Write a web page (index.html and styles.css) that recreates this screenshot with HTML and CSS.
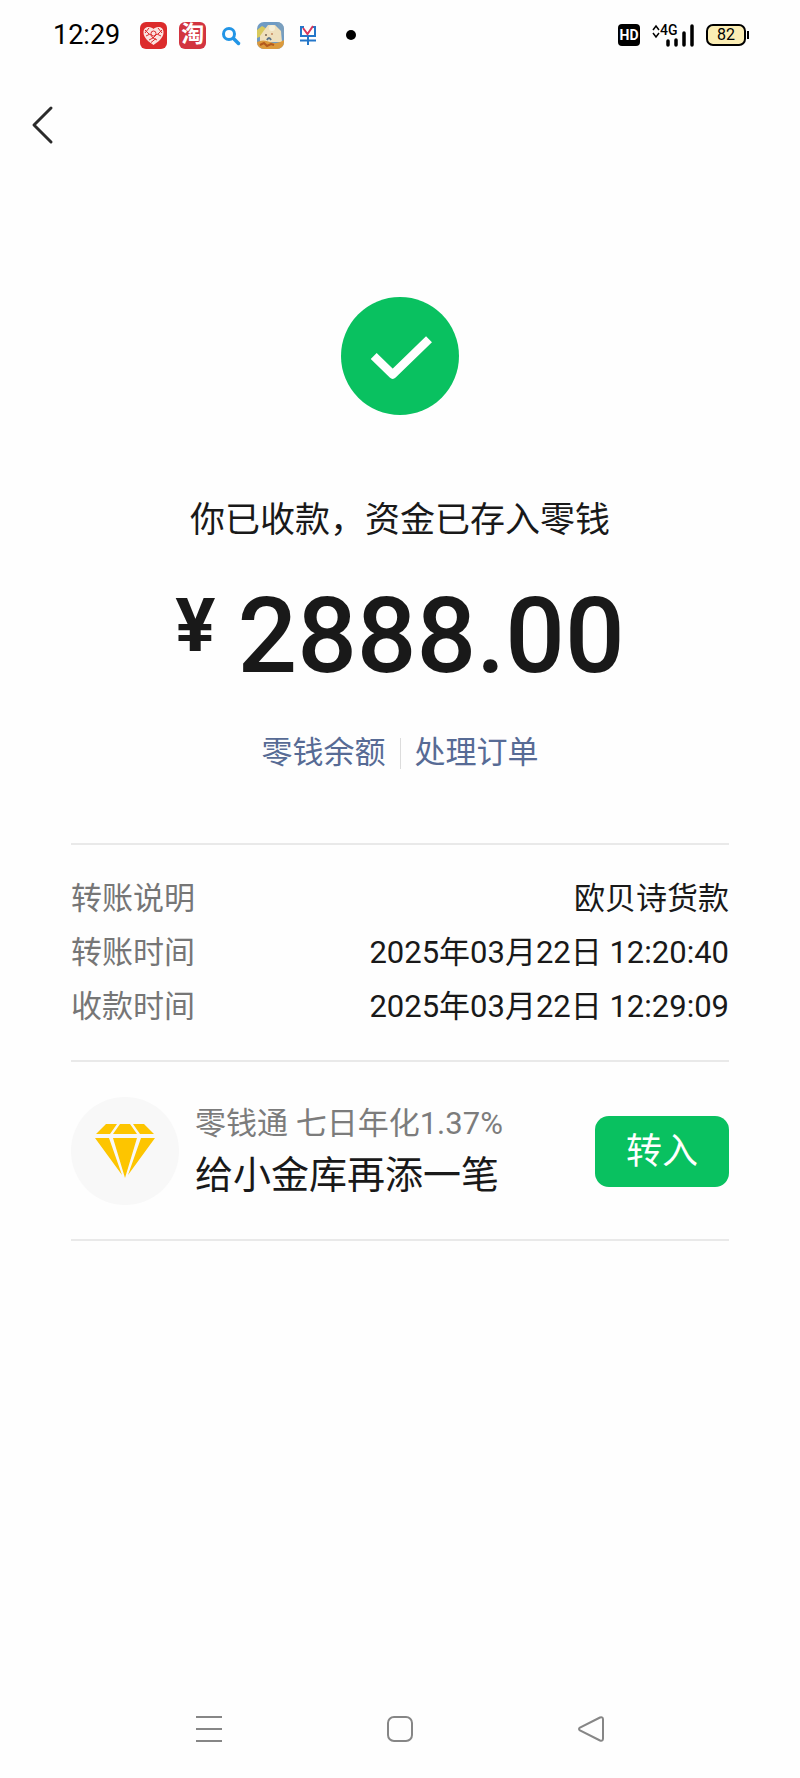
FILE: index.html
```html
<!DOCTYPE html>
<html lang="zh-CN">

<head>
    <meta charset="UTF-8">
    <meta name="viewport" content="width=device-width, initial-scale=1.0">
    <title>收款详情</title>
    <link rel="stylesheet" href="styles.css">
</head>

<body>
    <div class="status">
        <div class="status-left">
            <span class="time">12:29</span>
            <svg class="app" viewBox="0 0 27 27">
                <rect width="27" height="27" rx="6" fill="#dc2b2b" />
                <path d="M13.500 23C9 20 3.500 16 3.500 10.500C3.500 6.500 6 5 8.500 5C11 5 12.500 6 13.500 7C14.500 6 16 5 18.500 5C21 5 23.500 6.500 23.500 10.500C23.500 16 18 20 13.500 23Z" fill="#fbe3df" />
                <g fill="none" stroke="#dc2b2b" stroke-width="1">
                    <path d="M5 8l4 4M9 6l-4 5M18 6l4 5M22 8l-4 4M6 14l4-2 3 4 4-4 4 2M9 18l4-2 4 2M11 20.500l5-4" />
                    <circle cx="13.500" cy="11.500" r="2.500" />
                </g>
            </svg>
            <span class="app tao">淘</span>
            <svg class="app" viewBox="0 0 27 27">
                <circle cx="11" cy="12" r="5.500" fill="none" stroke="#2295e6" stroke-width="3" />
                <path d="M15.500 16.500l5 5" stroke="#2295e6" stroke-width="3.500" stroke-linecap="round" />
            </svg>
            <svg class="app" viewBox="0 0 27 27">
                <defs>
                    <clipPath id="round"><rect width="27" height="27" rx="7" /></clipPath>
                </defs>
                <g clip-path="url(#round)">
                    <rect width="27" height="27" fill="#6f9bc4" />
                    <path d="M0 8l5-4 5 3-3 6-7 3z" fill="#d8c95c" />
                    <path d="M20 0h7v14l-5-5z" fill="#7a9fbe" />
                    <path d="M3 20V14l5-7 3-4h7l6 6 1 11z" fill="#efe0bd" />
                    <circle cx="15" cy="6" r="3" fill="#f6eed8" />
                    <path d="M0 20q6-3 13 0t14-2v9H0z" fill="#dc9a3c" />
                    <path d="M3 23l4-2 3 3 4-2 3 1" fill="none" stroke="#b3591c" stroke-width="2" />
                    <path d="M10 18q2-4 4 0" fill="none" stroke="#57728a" stroke-width="2" />
                    <circle cx="9" cy="13" r="1" fill="#7b6650" />
                    <circle cx="15" cy="12" r="1" fill="#c78a60" />
                </g>
            </svg>
            <svg class="app" viewBox="0 0 27 27" fill="none" stroke-width="2">
                <path d="M8 5H5v9h14V5h-3M4 18.500h16M12 14v9" stroke="#2376c9" />
                <path d="M7 6l4.500 6L17 4" stroke="#d8375c" />
            </svg>
            <span class="dot"></span>
        </div>
        <div class="status-right">
            <span class="hd">HD</span>
            <svg class="signal" viewBox="0 0 42 24">
                <path d="M1 7l3-4 3 4M1 10l3 4 3-4" fill="none" stroke="#000" stroke-width="1.500" />
                <text class="signal-text" x="8" y="12">4G</text>
                <path d="M16 18v4M24 17v5M32 10v12M40 3v19" stroke="#000" stroke-width="3.500" stroke-linecap="round" />
            </svg>
            <span class="battery">82</span>
        </div>
    </div>

    <header class="header">
        <button class="back" aria-label="返回">
            <svg width="24" height="42" viewBox="0 0 24 42" fill="none" stroke="#2b2b2b" stroke-width="3" stroke-linecap="round" stroke-linejoin="round">
                <path d="M20 4L3 21l17 17" />
            </svg>
        </button>
    </header>

    <main class="main">
        <svg class="success" viewBox="0 0 118 118">
            <circle cx="59" cy="59" r="59" fill="#09c160" />
            <path d="M32.700 59l19 18.500L88 42.300" fill="none" stroke="#fff" stroke-width="8.500" stroke-linejoin="round" />
        </svg>
        <h1 class="title">你已收款，资金已存入零钱</h1>
        <p class="amount"><span class="yen">¥</span>2888.00</p>
        <div class="links">
            <a href="#">零钱余额</a>
            <span class="bar"></span>
            <a href="#">处理订单</a>
        </div>

        <dl class="detail">
            <div class="row">
                <dt>转账说明</dt>
                <dd>欧贝诗货款</dd>
            </div>
            <div class="row">
                <dt>转账时间</dt>
                <dd>2025年03月22日 12:20:40</dd>
            </div>
            <div class="row">
                <dt>收款时间</dt>
                <dd>2025年03月22日 12:29:09</dd>
            </div>
        </dl>

        <section class="promo">
            <div class="promo-icon">
                <svg width="60" height="54" viewBox="0 0 60 54" fill="#fdc500">
                    <path d="M11 0H22L15 10H1zM25 0H35L42 10H18zM38 0H49L59 10H45z" />
                    <path d="M0 14H14L27 51zM18 14H42L30 54zM46 14H60L33 51z" />
                </svg>
            </div>
            <div class="promo-text">
                <p class="promo-rate">零钱通 七日年化1.37%</p>
                <p class="promo-title">给小金库再添一笔</p>
            </div>
            <button class="btn">转入</button>
        </section>
    </main>

    <nav class="nav">
        <button aria-label="菜单">
            <svg width="28" height="28" viewBox="0 0 28 28"><path d="M1 2h26M1 14h26M1 26h26" /></svg>
        </button>
        <button aria-label="主页">
            <svg width="28" height="28" viewBox="0 0 28 28"><rect x="2" y="2" width="24" height="24" rx="6" /></svg>
        </button>
        <button aria-label="后退">
            <svg width="28" height="28" viewBox="0 0 28 28"><path d="M23 2.500L3 12.500Q1 14 3 15.500L23 25.500Q26 26.500 26 23.500V4.500Q26 1.500 23 2.500z" /></svg>
        </button>
    </nav>
</body>

</html>
```
FILE: styles.css
```css
* {
    margin: 0;
    padding: 0;
    box-sizing: border-box;
}

body {
    display: flex;
    flex-direction: column;
    min-height: 100vh;
    background: #fefefe;
    color: #191919;
    font-family: Roboto, "Noto Sans CJK SC", sans-serif;
    font-size: 31px;
}

button {
    border: none;
    background: none;
    font: inherit;
    cursor: pointer;
}

svg {
    display: block;
}

/* status bar */
.status {
    display: flex;
    justify-content: space-between;
    align-items: center;
    height: 70px;
    padding: 0 54px 0 53px;
    color: #000;
}

.status-left,
.status-right {
    display: flex;
    align-items: center;
    gap: 12px;
}

.time {
    margin-right: 8px;
    font-size: 27px;
    line-height: 36px;
}

.app {
    width: 27px;
    height: 27px;
}

.tao {
    border-radius: 6px;
    background: #d23440;
    color: #fff;
    font-size: 23px;
    font-weight: 700;
    line-height: 25px;
    text-align: center;
}

.dot {
    width: 10px;
    height: 10px;
    margin-left: 11px;
    border-radius: 50%;
    background: #000;
}

.hd {
    width: 22px;
    border-radius: 4px;
    background: #000;
    color: #fff;
    font-size: 14px;
    font-weight: 700;
    line-height: 22px;
    text-align: center;
}

.signal {
    width: 42px;
    height: 24px;
}

.signal-text {
    font-size: 14px;
    font-weight: 500;
}

.battery {
    position: relative;
    width: 40px;
    border: 2px solid #000;
    border-radius: 7px;
    background: #fbedb4;
    font-size: 16px;
    line-height: 18px;
    text-align: center;
}

.battery:after {
    content: "";
    position: absolute;
    top: 5px;
    right: -5px;
    width: 2px;
    height: 8px;
    background: #000;
}

/* header */
.header {
    display: flex;
    align-items: center;
    height: 110px;
    padding: 0 31px;
}

/* result */
.main {
    flex: 1;
    padding: 117px 71px 0;
    text-align: center;
}

.success {
    width: 118px;
    height: 118px;
    margin: 0 auto 80px;
}

.title {
    font-size: 35px;
    font-weight: 400;
    line-height: 52px;
}

.amount {
    display: flex;
    justify-content: center;
    gap: 22px;
    margin: 36px 0 40px;
    font-size: 105px;
    font-weight: 500;
    line-height: 108px;
}

.yen {
    font-size: 75px;
    font-weight: 700;
    line-height: 84px;
}

.links {
    display: flex;
    justify-content: center;
    align-items: center;
    gap: 14px;
    margin-bottom: 68px;
    line-height: 44px;
}

.links a {
    color: #576b95;
    text-decoration: none;
}

.bar {
    width: 1px;
    height: 31px;
    background: #dcdcdc;
}

.detail {
    padding: 27px 0 26px;
    border-top: 2px solid #e9e9e9;
}

.row {
    display: flex;
    justify-content: space-between;
    line-height: 54px;
}

dt {
    color: #767676;
}

/* promo */
.promo {
    display: flex;
    align-items: center;
    padding: 35px 0 34px;
    border-top: 2px solid #e9e9e9;
    border-bottom: 2px solid #e9e9e9;
    text-align: left;
}

.promo-icon {
    display: flex;
    justify-content: center;
    align-items: center;
    width: 108px;
    height: 108px;
    margin-right: 16px;
    border-radius: 50%;
    background: #f8f8f8;
}

.promo-text {
    flex: 1;
}

.promo-rate {
    color: #7c7c7c;
    line-height: 48px;
}

.promo-title {
    font-size: 38px;
    line-height: 54px;
}

.btn {
    padding: 2px 31px 0;
    border-radius: 14px;
    background: #09c160;
    color: #fff;
    font-size: 36px;
    line-height: 69px;
}

/* system navigation */
.nav {
    display: grid;
    grid-template-columns: repeat(3, 1fr);
    height: 98px;
    padding: 0 114px;
}

.nav svg {
    margin: 0 auto;
    fill: none;
    stroke: #868686;
    stroke-width: 2;
}
```
